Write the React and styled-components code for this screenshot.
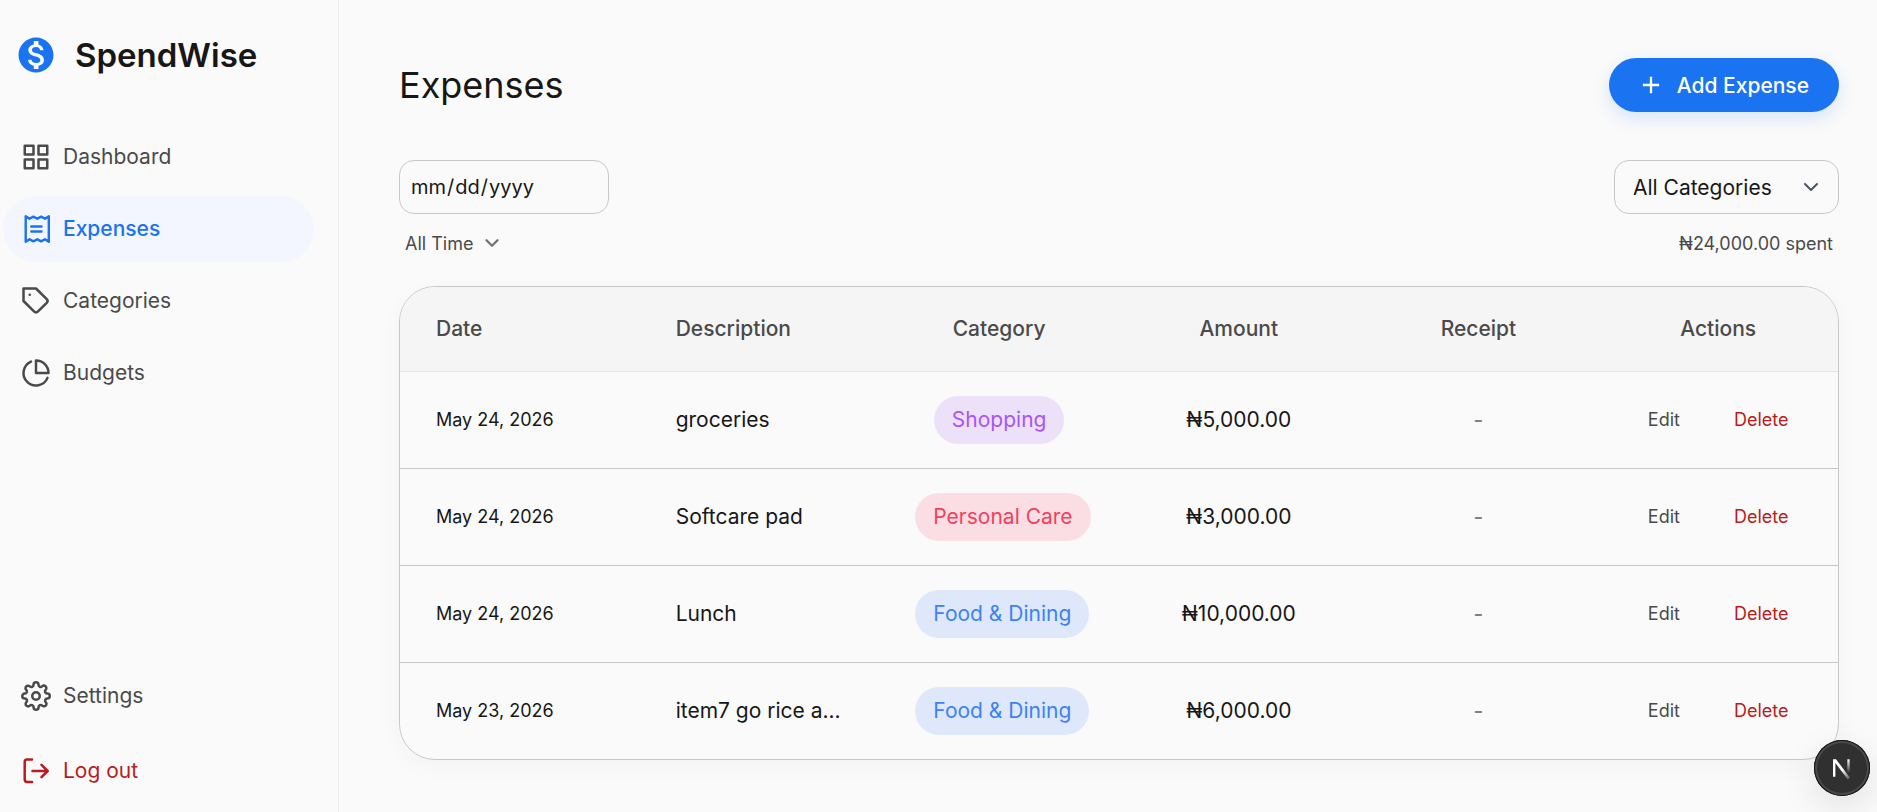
import React, { useState } from 'react';
import styled, { createGlobalStyle } from 'styled-components';
import { MdAdd, MdMonetizationOn } from 'react-icons/md';
import { FiChevronDown, FiGrid, FiPieChart, FiSettings, FiTag } from 'react-icons/fi';

const GlobalStyle = createGlobalStyle`
  * {
    box-sizing: border-box;
  }
  body {
    margin: 0;
    background: #fafafa;
    color: #171717;
    font-family: Inter, sans-serif;
    font-size: 21px;
  }
  button,
  input,
  select {
    font: inherit;
    color: inherit;
  }
`;

const Layout = styled.div`
  display: flex;
  min-height: 100vh;
`;

const Sidebar = styled.aside`
  display: flex;
  flex-direction: column;
  flex: none;
  width: 339px;
  padding: 32px 24px 8px 3px;
  border-right: 1px solid #ededed;
`;

const Brand = styled.div`
  display: flex;
  align-items: center;
  gap: 18px;
  height: 46px;
  margin-bottom: 46px;
  padding-left: 12px;
  font-size: 33px;
  font-weight: 600;

  svg {
    width: 42px;
    height: 42px;
    color: #1a73f0;
  }
`;

const Nav = styled.nav`
  display: flex;
  flex-direction: column;
  flex: 1;
  gap: 6px;
`;

const NavLink = styled.a`
  display: flex;
  align-items: center;
  gap: 12px;
  height: 66px;
  padding-left: 18px;
  border-radius: 33px;
  color: ${({ $danger, $active }) => ($danger ? '#b91c1c' : $active ? '#1a73f0' : '#4a4a4a')};
  background: ${({ $active }) => ($active ? '#f3f6ff' : 'transparent')};
  font-weight: ${({ $active }) => ($active ? 500 : 400)};
  line-height: 26px;
  text-decoration: none;

  svg {
    flex: none;
    width: 30px;
    height: 30px;
  }
`;

const LogoutButton = styled(NavLink).attrs({ as: 'button', type: 'button' })`
  width: 100%;
  margin-top: 3px;
  border: 0;
  cursor: pointer;
`;

const Spacer = styled.div`
  flex: 1;
`;

const Main = styled.main`
  flex: 1;
  min-width: 0;
  padding: 58px 38px 48px 60px;
`;

const Bar = styled.div`
  display: flex;
  align-items: center;
  justify-content: space-between;
`;

const TopBar = styled(Bar)`
  margin-bottom: 48px;
`;

const Title = styled.h1`
  margin: 0;
  font-size: 36px;
  font-weight: 400;
  line-height: 54px;
`;

const AddButton = styled.button`
  display: flex;
  align-items: center;
  gap: 12px;
  height: 54px;
  padding: 0 30px 0 28px;
  border: 0;
  border-radius: 27px;
  background: #1a73f0;
  color: #fff;
  font-weight: 500;
  box-shadow: 0 6px 18px rgba(26, 115, 240, 0.16);
  cursor: pointer;

  svg {
    width: 28px;
    height: 28px;
  }
`;

const DateInput = styled.input`
  width: 210px;
  height: 54px;
  padding: 0 10px;
  border: 1px solid #c8c8c8;
  border-radius: 15px;
  background: transparent;
  font-size: 20px;

  &::-webkit-calendar-picker-indicator {
    opacity: 0;
  }
`;

const SelectBox = styled.label`
  display: grid;
  align-items: center;
  width: ${({ $plain }) => ($plain ? '104px' : '225px')};

  select,
  svg {
    grid-area: 1 / 1;
  }

  select {
    appearance: none;
    height: ${({ $plain }) => ($plain ? '30px' : '54px')};
    padding: ${({ $plain }) => ($plain ? '0 6px' : '0 18px')};
    border: ${({ $plain }) => ($plain ? '0' : '1px solid #c8c8c8')};
    border-radius: 15px;
    background: transparent;
    color: ${({ $plain }) => ($plain ? '#4a4a4a' : '#171717')};
    font-size: ${({ $plain }) => ($plain ? '18px' : '21px')};
  }

  svg {
    justify-self: end;
    width: ${({ $plain }) => ($plain ? '22px' : '24px')};
    height: ${({ $plain }) => ($plain ? '22px' : '24px')};
    margin-right: ${({ $plain }) => ($plain ? '0' : '16px')};
    color: ${({ $plain }) => ($plain ? '#737373' : '#475569')};
    stroke-width: ${({ $plain }) => ($plain ? 2.5 : 2)};
    pointer-events: none;
  }
`;

const Summary = styled(Bar)`
  height: 30px;
  margin: 14px 0 28px;
  padding-right: 6px;
  color: #4a4a4a;
  font-size: 18px;
`;

const TableCard = styled.div`
  overflow: hidden;
  border: 1px solid #c8c8c8;
  border-radius: 36px;
  box-shadow: 0 6px 24px rgba(0, 0, 0, 0.03);
`;

const Table = styled.table`
  width: 100%;
  border-collapse: collapse;
  table-layout: fixed;
`;

const HeadCell = styled.th`
  height: 84px;
  padding: 0 36px;
  border-bottom: 1px solid #e5e5e5;
  background: #f5f5f5;
  color: #4a4a4a;
  font-weight: 500;
  text-align: ${({ $align }) => $align || 'center'};
`;

const Row = styled.tr`
  & + & td {
    border-top: 1px solid #c8c8c8;
  }
`;

const Cell = styled.td`
  height: 97px;
  padding: 0 36px;
  font-size: ${({ $small }) => ($small ? '18px' : '21px')};
  font-weight: ${({ $muted }) => ($muted ? 500 : 400)};
  text-align: ${({ $align }) => $align || 'center'};
  white-space: nowrap;
  color: ${({ $muted }) => ($muted ? '#808080' : '#171717')};
`;

const tones = {
  Shopping: ['#a855f7', '#ede1fa'],
  'Personal Care': ['#f43f5e', '#fadee3'],
  'Food & Dining': ['#3b82f6', '#dfe8fb'],
};

const Tag = styled.span`
  display: inline-flex;
  align-items: center;
  height: 48px;
  padding: 0 18px;
  border-radius: 24px;
  color: ${({ $tone }) => tones[$tone][0]};
  background: ${({ $tone }) => tones[$tone][1]};
`;

const Actions = styled.div`
  display: flex;
  justify-content: center;
  gap: 54px;
`;

const ActionButton = styled.button`
  padding: 0;
  border: 0;
  background: none;
  color: ${({ $danger }) => ($danger ? '#b91c1c' : '#4a4a4a')};
  font-size: 18px;
  cursor: pointer;
`;

const DevBadge = styled.button`
  position: fixed;
  right: 7px;
  bottom: 16px;
  width: 56px;
  height: 56px;
  padding: 0;
  border: 0;
  border-radius: 50%;
  background: #303030;
  box-shadow: inset 0 0 0 1px #171717, inset 0 0 0 3px #4a4a4a, 0 12px 36px rgba(0, 0, 0, 0.1);

  svg {
    display: block;
  }
`;

const ReceiptIcon = () => (
  <svg viewBox="0 0 30 30" fill="none" stroke="currentColor" strokeWidth="2.4" strokeLinejoin="round">
    <path d="M4.700 2.200v25.600l3.800-2.600 3.900 2.200 3.900-2.200 3.800 2.200 3.900-2.200 3.800 2.600V2.200L24 4.800l-3.900-2.200-3.800 2.200-3.900-2.200-3.900 2.200z" />
    <path d="M10.300 12.500h10.200M10.300 17.500h10.200" strokeLinecap="round" />
  </svg>
);

const LogoutIcon = () => (
  <svg viewBox="0 0 30 30" fill="none" stroke="currentColor" strokeWidth="2.500" strokeLinecap="round" strokeLinejoin="round">
    <path d="M11 3.600H6Q3.700 3.600 3.700 6v17.600Q3.700 26 6 26h5M11.500 15H26.500M20.500 8.800 26.700 15l-6.200 6.200" />
  </svg>
);

const BadgeIcon = () => (
  <svg width="56" height="56" viewBox="0 0 56 56" fill="none">
    <defs>
      <linearGradient id="diagonal" x1="28" y1="30" x2="36" y2="40" gradientUnits="userSpaceOnUse">
        <stop stopColor="#fff" />
        <stop offset="1" stopColor="#fff" stopOpacity="0.1" />
      </linearGradient>
      <linearGradient id="stem" x1="34" y1="19" x2="34" y2="33" gradientUnits="userSpaceOnUse">
        <stop stopColor="#fff" />
        <stop offset="1" stopColor="#fff" stopOpacity="0" />
      </linearGradient>
    </defs>
    <path d="M19 19.300h3L36 37.800l-2.200 1.700L21.400 23v13.700H19z" fill="url(#diagonal)" />
    <path d="M33.300 19.300h2.400V33h-2.400z" fill="url(#stem)" />
  </svg>
);

const links = [
  { label: 'Dashboard', icon: FiGrid },
  { label: 'Expenses', icon: ReceiptIcon, active: true },
  { label: 'Categories', icon: FiTag },
  { label: 'Budgets', icon: FiPieChart },
];

const expenses = [
  { date: 'May 24, 2026', description: 'groceries', category: 'Shopping', amount: '₦5,000.00' },
  { date: 'May 24, 2026', description: 'Softcare pad', category: 'Personal Care', amount: '₦3,000.00' },
  { date: 'May 24, 2026', description: 'Lunch', category: 'Food & Dining', amount: '₦10,000.00' },
  { date: 'May 23, 2026', description: 'item7 go rice a...', category: 'Food & Dining', amount: '₦6,000.00' },
];

const App = () => {
  const [date, setDate] = useState('');

  return (
    <Layout>
      <GlobalStyle />
      <Sidebar>
        <Brand>
          <MdMonetizationOn />
          SpendWise
        </Brand>
        <Nav>
          {links.map(({ label, icon: Icon, active }) => (
            <NavLink key={label} href="#" $active={active}>
              <Icon />
              {label}
            </NavLink>
          ))}
          <Spacer />
          <NavLink href="#">
            <FiSettings />
            Settings
          </NavLink>
          <LogoutButton $danger>
            <LogoutIcon />
            Log out
          </LogoutButton>
        </Nav>
      </Sidebar>
      <Main>
        <TopBar>
          <Title>Expenses</Title>
          <AddButton type="button">
            <MdAdd />
            Add Expense
          </AddButton>
        </TopBar>
        <Bar>
          <DateInput type="date" aria-label="Date" value={date} onChange={(e) => setDate(e.target.value)} />
          <SelectBox>
            <select aria-label="Category">
              <option>All Categories</option>
            </select>
            <FiChevronDown />
          </SelectBox>
        </Bar>
        <Summary>
          <SelectBox $plain>
            <select aria-label="Period">
              <option>All Time</option>
            </select>
            <FiChevronDown />
          </SelectBox>
          <span>₦24,000.00 spent</span>
        </Summary>
        <TableCard>
          <Table>
            <thead>
              <tr>
                <HeadCell $align="left">Date</HeadCell>
                <HeadCell $align="left">Description</HeadCell>
                <HeadCell>Category</HeadCell>
                <HeadCell>Amount</HeadCell>
                <HeadCell>Receipt</HeadCell>
                <HeadCell>Actions</HeadCell>
              </tr>
            </thead>
            <tbody>
              {expenses.map((item, index) => (
                <Row key={index}>
                  <Cell $align="left" $small>{item.date}</Cell>
                  <Cell $align="left">{item.description}</Cell>
                  <Cell>
                    <Tag $tone={item.category}>{item.category}</Tag>
                  </Cell>
                  <Cell>{item.amount}</Cell>
                  <Cell $muted>-</Cell>
                  <Cell>
                    <Actions>
                      <ActionButton type="button">Edit</ActionButton>
                      <ActionButton type="button" $danger>Delete</ActionButton>
                    </Actions>
                  </Cell>
                </Row>
              ))}
            </tbody>
          </Table>
        </TableCard>
      </Main>
      <DevBadge type="button" aria-label="Open dev tools">
        <BadgeIcon />
      </DevBadge>
    </Layout>
  );
};

export default App;
